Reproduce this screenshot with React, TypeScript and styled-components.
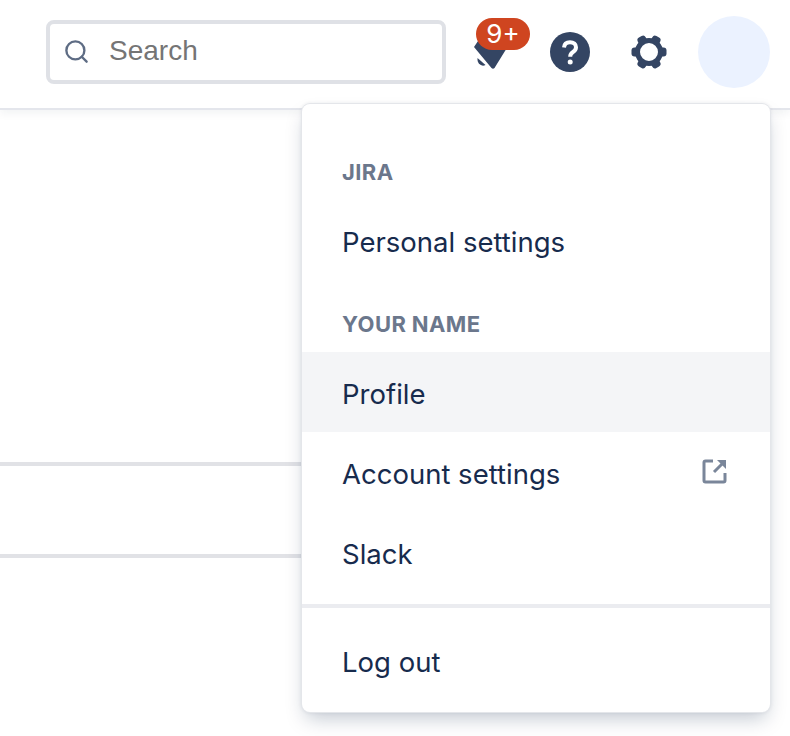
import styled, { createGlobalStyle } from "styled-components";
import { Search } from "lucide-react";

const GlobalStyle = createGlobalStyle`
  html, body {
    margin: 0;
    padding: 0;
    background: #fff;
    overflow: hidden;
  }
  * {
    box-sizing: border-box;
  }
`;

const Page = styled.div`
  position: relative;
  width: 790px;
  height: 736px;
  overflow: hidden;
  font-family: Inter, "Liberation Sans", sans-serif;
`;

const Header = styled.header`
  height: 110px;
  display: flex;
  align-items: flex-start;
  justify-content: flex-end;
  padding: 16px 20px 0 0;
  background: #fff;
  border-bottom: 2px solid #e4e6ec;
  box-shadow: 0 4px 8px rgba(9, 30, 66, 0.05);
`;

const SearchBox = styled.div`
  width: 400px;
  height: 64px;
  margin-top: 4px;
  display: flex;
  align-items: center;
  gap: 19px;
  padding: 0 13px;
  border: 4px solid #dfe1e6;
  border-radius: 8px;
  color: #5e6c84;
`;

const SearchIcon = styled(Search)`
  margin-bottom: 2px;
`;

const SearchText = styled.span`
  margin-bottom: 2px;
  font-family: "Liberation Sans", Arial, sans-serif;
  font-size: 28px;
  color: #757575;
`;

const IconButton = styled.div<{ $left: number; $width: number }>`
  position: relative;
  width: ${(p) => p.$width}px;
  height: 72px;
  margin-left: ${(p) => p.$left}px;
  display: flex;
  align-items: center;
  justify-content: flex-start;
`;

const Badge = styled.span`
  position: absolute;
  top: 2px;
  left: 2px;
  width: 54px;
  height: 32px;
  border-radius: 16px;
  display: flex;
  align-items: center;
  justify-content: center;
  background: #cf4520;
  color: #fff;
  font-size: 26px;
  line-height: 1;
`;

const Avatar = styled.div`
  width: 72px;
  height: 72px;
  margin-left: 30px;
  border-radius: 50%;
  background: #ebf2ff;
`;

const Content = styled.main`
  width: 600px;
  padding-top: 262px;
`;

const TableRow = styled.div<{ $height: number }>`
  height: ${(p) => p.$height}px;
  border-bottom: 4px solid #e1e2e6;
`;

const Menu = styled.nav`
  position: absolute;
  top: 104px;
  left: 302px;
  width: 468px;
  height: 608px;
  background: #fff;
  border-radius: 8px;
  box-shadow: 0 0 0 1px #e4e6ea, 0 10px 20px -4px rgba(9, 30, 66, 0.25), 0 0 4px rgba(9, 30, 66, 0.12);
  overflow: hidden;
`;

const MenuGroup = styled.div<{ $top: number }>`
  padding-top: ${(p) => p.$top}px;
`;

const GroupTitle = styled.div`
  height: 32px;
  margin-bottom: 12px;
  padding-left: 40px;
  display: flex;
  align-items: center;
  font-size: 22px;
  font-weight: 700;
  letter-spacing: 0.4px;
  color: #6b778c;
  text-transform: uppercase;
`;

const MenuItem = styled.div<{ $active?: boolean }>`
  height: 80px;
  display: flex;
  align-items: center;
  justify-content: space-between;
  padding: 3px 42px 0 40px;
  font-size: 27.5px;
  color: #172b4d;
  background: ${(p) => (p.$active ? "#f4f5f7" : "transparent")};
`;

const Divider = styled.div`
  height: 4px;
  margin-top: 12px;
  background: #ebecf0;
`;

const LastGroup = styled.div`
  padding-top: 12px;
`;

const ExternalSvg = styled.svg`
  margin-bottom: 5px;
`;

const BellIcon = () => (
  <svg width="36" height="36" viewBox="0 0 36 36" fill="#344563">
    <path d="M0 13 L6 4 L33 14 L31 17 L20.5 34 Q19 35.5 17.5 34 Z" />
    <path d="M3.5 24 L11.5 31 Q8.5 32.5 6 30.5 Q3 28 3.5 24 Z" />
  </svg>
);

const HelpIcon = () => (
  <svg width="40" height="40" viewBox="0 0 40 40">
    <circle cx="20" cy="20" r="20" fill="#344563" />
    <path
      d="M14 15.5 C14.3 11.8 16.8 10.2 20 10.2 C23.6 10.2 26 12.2 26 15.2 C26 17.8 24.6 19 22.7 20.2 C21 21.3 20.2 22.3 20.2 24.8"
      fill="none"
      stroke="#fff"
      strokeWidth="4"
    />
    <circle cx="20.2" cy="30" r="2.5" fill="#fff" />
  </svg>
);

const GearIcon = () => (
  <svg width="38" height="38" viewBox="0 0 38 38">
    <g fill="#344563">
      {[30, 90, 150, 210, 270, 330].map((angle) => (
        <rect key={angle} x="14.5" y="1.5" width="9" height="8" rx="3" transform={`rotate(${angle} 19 19)`} />
      ))}
    </g>
    <circle cx="19" cy="19" r="11.5" fill="none" stroke="#344563" strokeWidth="5" />
  </svg>
);

const ExternalIcon = () => (
  <ExternalSvg width="26" height="26" viewBox="0 0 26 26" fill="none" stroke="#7a869a" strokeWidth="3">
    <path d="M11 3 H3.5 Q2 3 2 4.5 V22.5 Q2 24 3.5 24 H21.5 Q23 24 23 22.5 V15" />
    <path d="M12 14 L22 4" />
    <path d="M15 2 H24 V11 Z" fill="#7a869a" stroke="none" />
  </ExternalSvg>
);

export default function App() {
  return (
    <>
      <GlobalStyle />
      <Page>
        <Header>
          <SearchBox>
            <SearchIcon size={27} strokeWidth={2.1} />
            <SearchText>Search</SearchText>
          </SearchBox>
          <IconButton $left={28} $width={56}>
            <BellIcon />
            <Badge>9+</Badge>
          </IconButton>
          <IconButton $left={20} $width={40}>
            <HelpIcon />
          </IconButton>
          <IconButton $left={40} $width={38}>
            <GearIcon />
          </IconButton>
          <Avatar />
        </Header>
        <Content>
          <TableRow $height={94} />
          <TableRow $height={92} />
        </Content>
        <Menu>
          <MenuGroup $top={52}>
            <GroupTitle>Jira</GroupTitle>
            <MenuItem>Personal settings</MenuItem>
          </MenuGroup>
          <MenuGroup $top={28}>
            <GroupTitle>Your name</GroupTitle>
            <MenuItem $active>Profile</MenuItem>
            <MenuItem>
              Account settings
              <ExternalIcon />
            </MenuItem>
            <MenuItem>Slack</MenuItem>
          </MenuGroup>
          <Divider />
          <LastGroup>
            <MenuItem>Log out</MenuItem>
          </LastGroup>
        </Menu>
      </Page>
    </>
  );
}
